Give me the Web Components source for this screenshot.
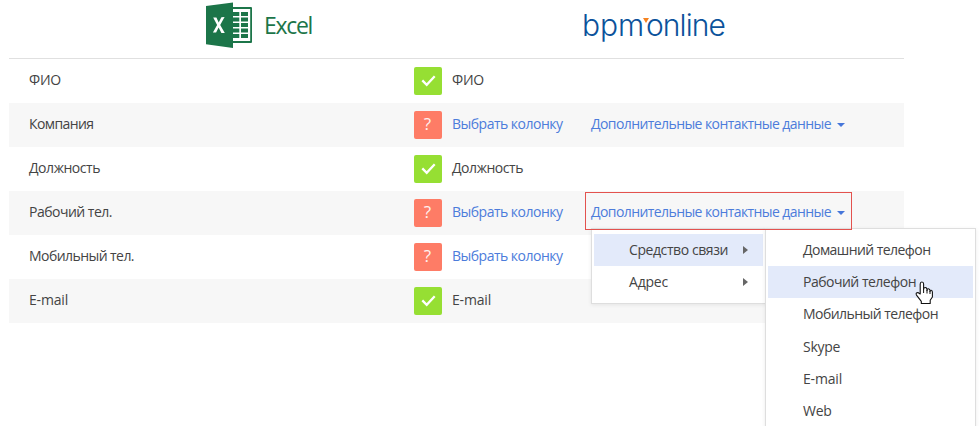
<!DOCTYPE html>
<html lang="ru"><head><meta charset="utf-8"><title>Импорт из Excel</title>
<style>html,body{margin:0;background:#fff;overflow:hidden}body{width:980px;height:426px}</style></head><body>
<mapping-page></mapping-page>
<script>
const define=(name,html,setup)=>customElements.define(name,class extends HTMLElement{
  connectedCallback(){
    if(this.shadowRoot)return;
    this.attachShadow({mode:'open'}).innerHTML=html;
    if(setup)setup.call(this,this.shadowRoot);
  }
});

// Text label spaced out to the width given in "w".
define('fit-text',`<style>:host{display:inline-block;white-space:nowrap}span{display:inline-block}</style><span><slot></slot></span>`,function(root){
  const s=root.querySelector('span'),w=+this.getAttribute('w');
  if(w){s.style.letterSpacing=((w-s.getBoundingClientRect().width)/this.textContent.length).toFixed(3)+'px';}
});

define('excel-logo',`<style>:host{display:flex;align-items:flex-start;color:#1c7549;font:23px/30px "Open Sans","Noto Sans",sans-serif}svg{display:block;flex:none}fit-text{margin:10px 0 0 12px}</style>
<svg width="46" height="50" viewBox="0 0 46 50"><path fill="#1c7549" d="M0 6 27 2.5V48L0 44.2z"/><path fill="#1c7549" fill-rule="evenodd" d="M26 7H45Q46 7 46 8V42Q46 43 45 43H26zM27 9V41H44.2V9z"/>
<path stroke="#1c7549" stroke-width="3.8" d="M27 14h6.3M35 14h7M27 19.5h6.3M35 19.5h7M27 25h6.3M35 25h7M27 30.5h6.3M35 30.5h7M27 36h6.3M35 36h7"/>
<path fill="#fff" d="M7.2 17.5h3.2l2.3 5 2.7-5.2 3.2-.2-4.4 7.9 4.6 8.1-3.4-.2-2.8-5.4-2.5 5.1-3.2-.2 4.2-7.4z"/></svg><fit-text w="48">Excel</fit-text>`);

define('bpm-logo',`<style>:host{display:flex;position:relative;color:#0b529b;font:300 30px/40px Inter,"Liberation Sans",sans-serif}svg{position:absolute;left:62px;top:13px}</style>
<fit-text w="62" style="margin-left:1px">bpm</fit-text><fit-text w="79" style="margin-left:2px">online</fit-text><svg width="6" height="5"><path fill="#f58220" d="M0 0h6L3 5z"/></svg>`);

define('state-badge',`<style>:host{display:flex;width:28px;height:28px;border-radius:2px;align-items:center;justify-content:center;background:#fe7c66;color:#fff;font:17px/26px "Open Sans",sans-serif}:host([ok]){background:#96df33}svg{display:block}span{margin-top:-2px;margin-right:1px;opacity:.9}</style>`,function(root){
  root.innerHTML+=this.hasAttribute('ok')?'<svg width="28" height="28"><path d="M8.3 13.4 12.7 17.8 20.7 9.2" fill="none" stroke="#fff" stroke-width="2.3"/></svg>':'<span>?</span>';
});

define('more-link',`<style>:host{display:flex;box-sizing:border-box;align-items:center;width:267px;height:38px;border:1px solid transparent;padding:2px 0 0 5px;color:#4c7cdb}:host([active]){border-color:#e3524e;position:relative;z-index:4}svg{margin:1px 0 0 6px}</style>
<fit-text w="240">Дополнительные контактные данные</fit-text><svg width="8" height="4"><path fill="#4676da" d="M0 0h8L4 4z"/></svg>`);

define('map-row',`<style>:host{display:grid;grid-template-columns:405px 28px 143px 1fr;align-items:center;height:44px;box-sizing:border-box}:host([alt]){background:#f7f7f7}.n{padding:0 0 2px 20px}.t{padding:0 0 2px 10px}.m{align-self:start;padding-top:1px}</style>
<div class="n"><slot name="name"></slot></div><slot name="state"></slot><div class="t"><slot name="target"></slot></div><div class="m"><slot name="more"></slot></div>`);

define('menu-item',`<style>:host{display:flex;align-items:center;justify-content:space-between;height:32.2px;padding:0 15px 0 35px}:host([active]){background:#e3eafa}svg{display:none;margin-top:0}:host([sub]) svg{display:block}</style><slot></slot><svg width="5" height="8"><path fill="#666" d="M0 0 5 4 0 8z"/></svg>`);

define('drop-menu',`<style>:host{display:block;position:absolute;box-sizing:border-box;background:#fff;border:1px solid #dedede;padding:5px 2px;box-shadow:0 1px 4px rgba(0,0,0,.08)}</style><slot></slot>`);

define('mouse-pointer',`<style>:host{display:block;position:absolute;z-index:6}svg{display:block}</style><svg width="19" height="24" viewBox="0 0 19 24"><path fill="#fff" stroke="#111" stroke-width="1.1" stroke-linejoin="round" d="M5.2 13V3Q5.2 1 6.9 1T8.6 3V8.2Q8.8 6.5 10.3 6.5T12 8.5V9.5Q12 7.5 13.4 7.7T15 9.5V10.5Q15.1 9 16.2 9.2T17.4 11V16L15.2 19.2V22.5H6.3V20.3L1.5 14.1Q.6 12.3 1.9 11.8T4 12.2z"/><path stroke="#111" d="M8.6 8v4M12 9v3.5M15 10v3"/></svg>`);

const t=(s,w)=>`<fit-text w="${w}">${s}</fit-text>`;
const widths={'ФИО':32,'Компания':64.5,'Должность':71,'Рабочий тел.':83,'Мобильный тел.':105,'E-mail':39};
const rows=[['ФИО',1],['Компания',0,'more'],['Должность',1],['Рабочий тел.',0,'active'],['Мобильный тел.',0],['E-mail',1]];
const rowHtml=rows.map(([n,ok,more],i)=>`<map-row ${i%2?'alt':''}><span slot="name">${t(n,widths[n])}</span><state-badge slot="state" ${ok?'ok':''}></state-badge><span slot="target" ${ok?'':'class="link"'}>${ok?t(n,widths[n]):t('Выбрать колонку',110.5)}</span>${more?`<more-link slot="more" ${more==='active'?'active':''}></more-link>`:''}</map-row>`).join('');

define('mapping-page',`<style>:host{display:block;position:relative;width:980px;height:426px;overflow:hidden;background:#fff;color:#444;font:14px/20px "Open Sans","Noto Sans",sans-serif}
header{display:flex;box-sizing:border-box;width:895px;height:59px;margin-left:9px;border-bottom:1px solid #e0e0e0;padding-left:197px}
header bpm-logo{margin:5px 0 0 265px}header excel-logo{width:110px}
main{width:895px;margin-left:9px}.link{color:#4c7cdb}
.a{left:591px;top:228px;width:175px;height:76px;z-index:2}.b{left:765px;top:228px;width:211px;height:210px;z-index:3}
mouse-pointer{left:915px;top:281px}</style>
<header><excel-logo></excel-logo><bpm-logo></bpm-logo></header><main>${rowHtml}</main>
<drop-menu class="a"><menu-item active sub>${t('Средство связи',99)}</menu-item><menu-item sub>${t('Адрес',39)}</menu-item></drop-menu>
<drop-menu class="b"><menu-item>${t('Домашний телефон',127.5)}</menu-item><menu-item active>${t('Рабочий телефон',113)}</menu-item><menu-item>${t('Мобильный телефон',135)}</menu-item><menu-item>${t('Skype',37)}</menu-item><menu-item>${t('E-mail',39)}</menu-item><menu-item>${t('Web',28.5)}</menu-item></drop-menu>
<mouse-pointer></mouse-pointer>`);
</script></body></html>
